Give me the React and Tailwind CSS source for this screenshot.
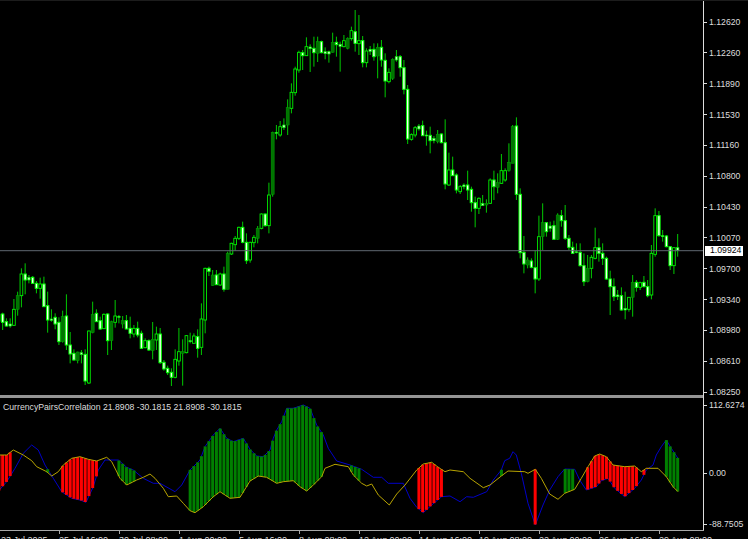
// bars traced off the chart: [high, low, bodyTop, bodyBottom, kind], y values are 3x page px
// kind: b = hollow, w = white body, g = dark green body, s = tiny body
const CANDLES = [
  [940, 1008, 942, 965, 'g'], [938, 990, 942, 967, 'w'], [955, 980, 965, 978, 'w'], [955, 983, 972, 978, 's'],
  [897, 978, 928, 976, 'b'], [875, 947, 887, 928, 'g'], [805, 922, 822, 887, 'b'], [790, 883, 822, 840, 'w'],
  [825, 850, 832, 840, 's'], [828, 852, 832, 850, 'w'], [843, 880, 850, 865, 'w'], [833, 896, 852, 865, 'b'],
  [830, 920, 852, 920, 'w'], [875, 998, 917, 960, 'w'], [928, 965, 957, 961, 's'], [940, 988, 952, 972, 'w'],
  [952, 1035, 967, 1025, 'w'], [932, 1028, 950, 1025, 'g'], [883, 1050, 948, 1035, 'w'], [996, 1090, 1035, 1062, 'w'],
  [1048, 1082, 1060, 1080, 'w'], [1055, 1090, 1056, 1082, 'g'], [1050, 1090, 1058, 1064, 's'], [1048, 1155, 1063, 1143, 'w'],
  [992, 1152, 993, 1149, 'b'], [905, 1000, 943, 998, 'g'], [928, 966, 940, 965, 'w'], [950, 990, 962, 987, 'w'],
  [940, 987, 943, 986, 'b'], [940, 1065, 942, 1022, 'w'], [962, 1050, 965, 1022, 'g'], [900, 983, 948, 967, 'b'],
  [945, 970, 949, 952, 's'], [948, 985, 962, 972, 'g'], [945, 988, 962, 987, 'w'], [950, 1015, 985, 1000, 'w'],
  [975, 1012, 985, 1002, 'b'], [965, 1012, 985, 1005, 'w'], [992, 1047, 1000, 1045, 'w'], [1015, 1045, 1022, 1043, 'b'],
  [1018, 1053, 1022, 1050, 'w'], [966, 1078, 1018, 1052, 'g'], [980, 1050, 1002, 1020, 'b'], [984, 1092, 1002, 1088, 'w'],
  [1080, 1112, 1087, 1107, 'w'], [1097, 1125, 1105, 1118, 'w'], [1105, 1158, 1117, 1132, 'w'], [1048, 1135, 1078, 1132, 'b'],
  [984, 1097, 1055, 1083, 'b'], [1018, 1157, 1055, 1060, 'g'], [1005, 1060, 1007, 1058, 'b'], [998, 1030, 1022, 1025, 's'],
  [1000, 1030, 1008, 1030, 'b'], [988, 1073, 1010, 1045, 'w'], [910, 1065, 957, 1042, 'b'], [803, 1000, 805, 960, 'b'],
  [800, 828, 805, 814, 'w'], [810, 858, 825, 857, 'g'], [810, 855, 825, 854, 'w'], [818, 858, 822, 855, 'b'],
  [800, 875, 822, 868, 'w'], [755, 868, 760, 868, 'g'], [728, 765, 730, 762, 'b'], [708, 752, 715, 734, 'b'],
  [680, 720, 682, 715, 'b'], [665, 730, 682, 727, 'w'], [700, 792, 727, 782, 'w'], [725, 788, 727, 780, 'b'],
  [705, 742, 712, 728, 'b'], [678, 730, 685, 715, 'g'], [640, 688, 642, 685, 'b'], [640, 680, 642, 677, 'w'],
  [548, 700, 585, 677, 'b'], [395, 590, 397, 583, 'g'], [375, 418, 397, 400, 's'], [363, 410, 380, 405, 'b'],
  [355, 390, 375, 383, 's'], [298, 405, 323, 375, 'g'], [250, 340, 277, 325, 'b'], [200, 287, 207, 278, 'b'],
  [152, 218, 157, 210, 'b'], [150, 210, 158, 167, 'w'], [112, 168, 140, 167, 'b'], [133, 216, 141, 146, 's'],
  [110, 200, 145, 158, 'w'], [110, 186, 125, 160, 'g'], [122, 160, 125, 158, 'w'], [142, 178, 155, 161, 's'],
  [152, 188, 155, 162, 's'], [98, 158, 127, 157, 'g'], [110, 170, 127, 134, 'w'], [125, 215, 133, 139, 's'],
  [105, 142, 122, 140, 'b'], [112, 148, 115, 145, 'g'], [80, 122, 92, 116, 'b'], [30, 155, 95, 130, 'w'],
  [45, 165, 122, 131, 'b'], [108, 202, 122, 188, 'w'], [145, 202, 153, 188, 'b'], [138, 165, 148, 154, 's'],
  [130, 182, 148, 170, 'w'], [130, 235, 142, 168, 'g'], [120, 200, 142, 180, 'w'], [160, 292, 181, 243, 'w'],
  [205, 250, 217, 245, 'b'], [175, 240, 178, 235, 'g'], [150, 185, 170, 180, 's'], [165, 230, 170, 203, 'w'],
  [180, 283, 203, 268, 'w'], [255, 432, 268, 417, 'w'], [400, 422, 404, 418, 'b'], [378, 412, 383, 405, 'b'],
  [372, 392, 378, 387, 's'], [362, 405, 377, 407, 'w'], [392, 437, 405, 408, 's'], [380, 460, 406, 422, 'w'],
  [408, 430, 415, 422, 's'], [390, 430, 403, 425, 'g'], [400, 430, 402, 428, 'w'], [358, 568, 428, 552, 'w'],
  [458, 558, 510, 555, 'b'], [470, 525, 510, 527, 'w'], [520, 580, 525, 570, 'w'], [555, 582, 560, 575, 'b'],
  [550, 568, 555, 560, 's'], [512, 600, 555, 570, 'w'], [560, 635, 568, 608, 'w'], [590, 682, 608, 625, 'w'],
  [592, 642, 595, 625, 'b'], [585, 610, 610, 617, 's'], [598, 638, 610, 615, 'g'], [535, 612, 540, 610, 'b'],
  [512, 600, 540, 560, 'w'], [520, 580, 548, 562, 'g'], [462, 552, 512, 550, 'b'], [505, 545, 512, 540, 'b'],
  [430, 515, 487, 512, 'g'], [375, 490, 380, 490, 'g'], [352, 600, 378, 583, 'w'], [565, 775, 583, 758, 'w'],
  [708, 820, 757, 792, 'w'], [772, 805, 780, 795, 'g'], [775, 805, 783, 802, 'w'], [752, 880, 803, 837, 'w'],
  [647, 843, 710, 837, 'b'], [610, 750, 668, 710, 'g'], [668, 710, 668, 695, 'w'], [665, 695, 678, 685, 's'],
  [662, 718, 677, 718, 'w'], [640, 720, 645, 718, 'g'], [630, 680, 647, 662, 'w'], [615, 720, 662, 715, 'w'],
  [705, 750, 715, 742, 'w'], [725, 762, 742, 760, 'w'], [730, 760, 755, 758, 's'], [730, 800, 757, 797, 'w'],
  [760, 858, 797, 845, 'w'], [765, 847, 805, 845, 'g'], [765, 835, 772, 805, 'b'], [683, 778, 743, 775, 'b'],
  [715, 785, 743, 760, 'w'], [730, 795, 760, 775, 'w'], [770, 840, 775, 837, 'w'], [812, 945, 837, 860, 'w'],
  [835, 903, 860, 890, 'w'], [870, 900, 885, 890, 's'], [862, 932, 887, 930, 'w'], [875, 958, 925, 930, 's'],
  [892, 935, 892, 928, 'b'], [825, 950, 847, 892, 'g'], [840, 875, 847, 862, 'w'], [845, 870, 848, 862, 'b'],
  [828, 862, 847, 860, 'w'], [840, 892, 860, 887, 'w'], [735, 898, 760, 885, 'b'], [625, 770, 647, 763, 'b'],
  [633, 710, 647, 707, 'w'], [690, 725, 707, 710, 's'], [705, 742, 708, 740, 'w'], [740, 810, 740, 797, 'w'],
  [742, 822, 743, 797, 'b'], [702, 770, 743, 752, 's'],
]

const candleX = (i) => 2.67 + 3.75 * (i - 1)

const BODY = {
  b: { fill: '#000', stroke: '#00f000', w: 2.7, sw: 0.9 },
  w: { fill: '#f4fff0', stroke: '#00ff00', w: 2.4, sw: 1 },
  g: { fill: '#007400', stroke: '#00a000', w: 3, sw: 0.5 },
  s: { fill: '#c8ffc0', stroke: '#00f000', w: 2.4, sw: 0.7 },
}

// indicator traces, [3x x, 3x y] per crop, each crop has its own origin
const fromCrop = (x0, pts) => pts.map(([x, y]) => [x0 + x / 3, 390 + y / 3])

const BLUE = [
  ...fromCrop(0, [[0, 298], [20, 275], [45, 235], [70, 190], [95, 165], [115, 180], [135, 225], [160, 265], [185, 305], [215, 325], [240, 330], [258, 337], [280, 290], [295, 240], [315, 210], [355, 210], [380, 232], [400, 240], [430, 265], [460, 280], [480, 280], [525, 305], [545, 285], [570, 240], [600, 210], [615, 170], [640, 135], [660, 115], [680, 145], [700, 155], [730, 145]]),
  ...fromCrop(250, [[0, 178], [20, 198], [40, 200], [60, 180], [70, 145], [80, 120], [95, 95], [110, 55], [130, 55], [160, 45], [180, 55], [200, 105], [220, 135], [235, 175], [260, 213], [300, 225], [335, 238], [370, 262], [395, 262], [415, 280], [460, 280], [480, 325], [500, 352], [520, 368], [545, 345], [575, 320], [600, 318], [630, 335], [650, 320], [670, 322], [710, 305], [730, 270]]),
  ...fromCrop(498, [[10, 240], [20, 212], [35, 205], [45, 185], [55, 195], [70, 250], [90, 340], [112, 405], [135, 345], [155, 300], [180, 260], [200, 237], [230, 238], [245, 270], [265, 300], [295, 290], [310, 272], [330, 265], [350, 295], [380, 320], [410, 295], [430, 270], [445, 240], [465, 225], [475, 195], [490, 170], [505, 150], [520, 175], [540, 205]]),
]

const YELLOW = [
  ...fromCrop(0, [[0, 195], [20, 195], [40, 180], [70, 195], [95, 212], [110, 230], [140, 245], [155, 258], [175, 245], [190, 225], [215, 205], [240, 200], [265, 208], [290, 213], [320, 202], [335, 215], [360, 265], [380, 285], [410, 270], [430, 262], [450, 252], [465, 265], [490, 295], [505, 320], [530, 318], [550, 340], [570, 362], [585, 368], [610, 350], [640, 320], [660, 305], [690, 325], [720, 322]]),
  ...fromCrop(250, [[0, 273], [25, 258], [50, 262], [80, 280], [100, 275], [130, 272], [150, 290], [170, 303], [190, 285], [215, 260], [225, 235], [255, 223], [295, 230], [310, 255], [335, 280], [350, 288], [365, 282], [385, 315], [418, 345], [440, 312], [465, 285], [500, 240], [520, 222], [545, 217], [565, 232], [585, 245], [600, 240], [640, 245], [660, 265], [700, 293], [720, 285]]),
  ...fromCrop(498, [[10, 258], [30, 243], [80, 245], [90, 250], [112, 238], [130, 265], [155, 312], [180, 328], [200, 310], [230, 298], [250, 265], [270, 230], [290, 198], [305, 192], [325, 200], [345, 225], [380, 230], [410, 228], [430, 245], [445, 235], [480, 235], [505, 260], [525, 290], [540, 305]]),
]

// candle index ranges where the histogram shows
const HIST = [
  [0, 3, '#ff0000'], [13, 13, '#008000'], [17, 26, '#ff0000'], [32, 36, '#008000'], [51, 86, '#008000'],
  [94, 96, '#008000'], [112, 118, '#ff0000'], [134, 134, '#008000'], [143, 143, '#ff0000'], [151, 153, '#008000'],
  [157, 170, '#ff0000'], [172, 173, '#ff0000'], [178, 181, '#008000'],
]

function yAt(pts, x) {
  for (let i = 1; i < pts.length; i++) {
    if (x <= pts[i][0]) {
      const [x0, y0] = pts[i - 1]
      const [x1, y1] = pts[i]
      return y0 + ((y1 - y0) * (x - x0)) / (x1 - x0)
    }
  }
  return pts[pts.length - 1][1]
}

const toLine = (pts) => pts.map(([x, y]) => `${x.toFixed(1)},${y.toFixed(1)}`).join(' ')

const PRICES = ['1.12620', '1.12260', '1.11890', '1.11530', '1.11160', '1.10800', '1.10430', '1.10070', '1.09700', '1.09340', '1.08980', '1.08610', '1.08250']

const TIMES = ['23 Jul 2025', '25 Jul 16:00', '30 Jul 08:00', '1 Aug 00:00', '5 Aug 16:00', '8 Aug 08:00', '12 Aug 00:00', '14 Aug 16:00', '19 Aug 08:00', '22 Aug 00:00', '26 Aug 16:00', '29 Aug 08:00']

function PriceChart() {
  return (
    <svg className="block h-[394px] w-full" viewBox="0 1 703 394">
      {CANDLES.map(([hi, lo, top, bot, kind], i) => {
        const x = candleX(i)
        const b = BODY[kind]
        return (
          <g key={i}>
            <line x1={x} x2={x} y1={hi / 3} y2={lo / 3} stroke="#00e000" strokeWidth="0.9" />
            <rect x={x - b.w / 2} y={top / 3} width={b.w} height={Math.max((bot - top) / 3, 1)} fill={b.fill} stroke={b.stroke} strokeWidth={b.sw} />
          </g>
        )
      })}
      <line x1="0" x2="703" y1="250.7" y2="250.7" stroke="#5f6870" strokeWidth="1" />
    </svg>
  )
}

function CorrelationChart() {
  const bars = []
  HIST.forEach(([from, to, color]) => {
    for (let i = from; i <= to; i++) {
      const x = candleX(i)
      const a = yAt(BLUE, x)
      const b = yAt(YELLOW, x)
      bars.push(<rect key={i} x={x - 1.5} y={Math.min(a, b)} width="3" height={Math.abs(a - b)} fill={color} />)
    }
  })
  return (
    <svg className="block h-[132px] w-full" viewBox="0 398 703 132">
      <polyline points={toLine(BLUE)} fill="none" stroke="#0000c8" strokeWidth="1" />
      {bars}
      <polyline points={toLine(YELLOW)} fill="none" stroke="#b8a400" strokeWidth="1" />
    </svg>
  )
}

function AxisRow({ children }) {
  return (
    <div className="flex h-3 shrink-0 items-center">
      <span className="h-px w-[3px] bg-[#ddd]" />
      <span className="ml-[2px] text-[8.7px] leading-3 text-[#ddd]">{children}</span>
    </div>
  )
}

export default function App() {
  return (
    <div className="h-[539px] w-[748px] overflow-hidden bg-black font-['Liberation_Sans',sans-serif]">
      <div className="h-px bg-[#1c1c1c]" />
      <div className="flex h-[529px]">
        <div className="flex w-[703px] flex-col">
          <PriceChart />
          <div className="h-[3px] shrink-0 bg-[#959595]" />
          <div className="relative">
            <div className="absolute left-[3px] top-[3px] text-[8.7px] leading-3 text-[#ddd]">
              CurrencyPairsCorrelation 21.8908 -30.1815 21.8908 -30.1815
            </div>
            <CorrelationChart />
          </div>
        </div>
        <div className="w-px shrink-0 bg-[#ddd]" />
        <div className="relative flex-1 pt-[15px]">
          <div className="flex flex-col gap-[18.85px]">
            {PRICES.map((p) => (
              <AxisRow key={p}>{p}</AxisRow>
            ))}
          </div>
          <div className="mt-px">
            <AxisRow>112.6274</AxisRow>
          </div>
          <div className="mt-[56px]">
            <AxisRow>0.00</AxisRow>
          </div>
          <div className="mt-[39px]">
            <AxisRow>-88.7505</AxisRow>
          </div>
          <div className="absolute left-[1px] top-[244.7px] flex h-[10px] w-[38px] items-center bg-white pl-[5px] text-[8.7px] leading-none text-black">
            1.09924
          </div>
        </div>
      </div>
      <div className="h-px w-[704px] bg-[#a8a8a8]" />
      <div className="flex h-[3px] pl-[59px]">
        {TIMES.slice(1).map((t) => (
          <div key={t} className="w-[60px] shrink-0 border-l border-[#a8a8a8]" />
        ))}
      </div>
      <div className="mt-[1.5px] flex whitespace-nowrap pl-px text-[9px] leading-[9px] text-[#ddd]">
        {TIMES.map((t, i) => (
          <div key={t} className={i === 0 ? 'w-[58px] shrink-0' : 'w-[60px] shrink-0'}>
            {t}
          </div>
        ))}
      </div>
    </div>
  )
}
